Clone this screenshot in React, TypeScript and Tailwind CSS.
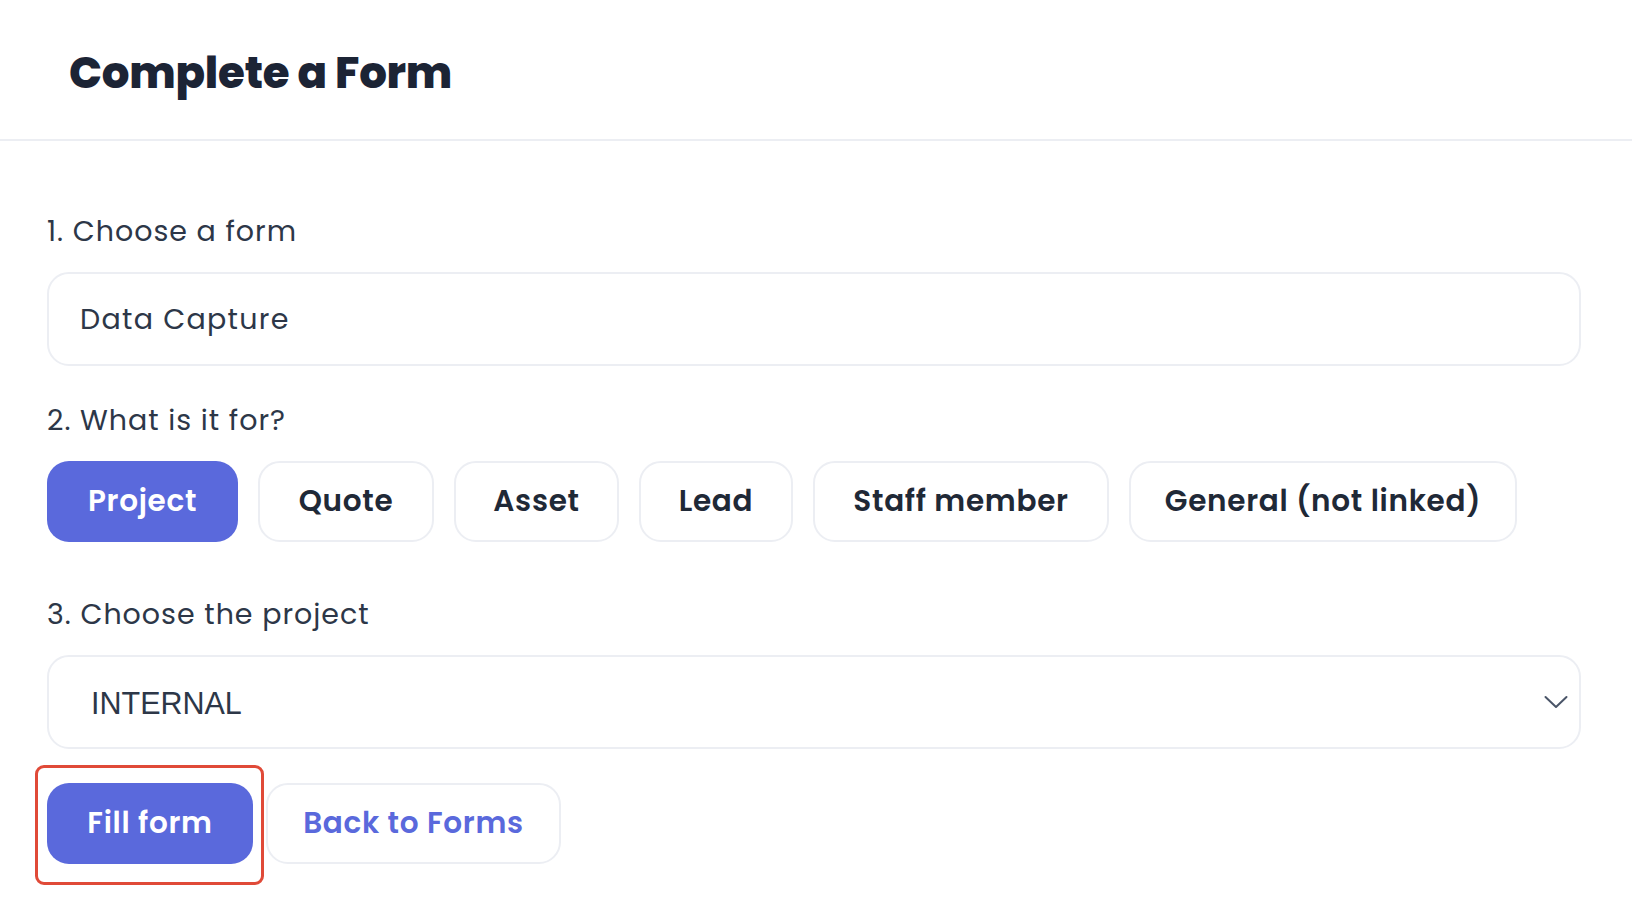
import React, { useState } from "react";

const ui = "font-['Poppins','Open_Sans','Noto_Sans',sans-serif]";

// Each target pill keeps its own width so the row lines up with the design.
const targets: { name: string; w: string }[] = [
  { name: "Project", w: "w-[191px]" },
  { name: "Quote", w: "w-[176px]" },
  { name: "Asset", w: "w-[165px]" },
  { name: "Lead", w: "w-[154px]" },
  { name: "Staff member", w: "w-[296px]" },
  { name: "General (not linked)", w: "w-[388px]" },
];

function Label({ children }: { children: React.ReactNode }) {
  return <div className="h-[40px] flex items-center text-[28.5px] leading-[40px] text-[#2d3748] tracking-[1px]">{children}</div>;
}

function Chevron() {
  return (
    <svg width="24" height="14" viewBox="0 0 24 14" fill="none" stroke="#4a5568" strokeWidth="2" strokeLinecap="round" strokeLinejoin="round">
      <path d="M1.5 2l10.5 10 10.5-10" />
    </svg>
  );
}

const pill = "h-[81px] shrink-0 rounded-[22px] text-[29.5px] font-semibold tracking-[0.7px] flex items-center justify-center";

export default function App() {
  const [target, setTarget] = useState("Project");
  return (
    <div className={`min-h-[920px] bg-white ${ui}`}>
      <header className="h-[141px] border-b-2 border-[#eceef3] flex items-center pl-[69px]">
        <h1 className="text-[43.5px] font-extrabold tracking-[-0.2px] text-[#1c2435] leading-none mt-[7px]">Complete a Form</h1>
      </header>

      <main className="pl-[47px] pr-[51px] pt-[70px] flex flex-col">
        <Label>1. Choose a form</Label>
        <div className="mt-[21px] h-[94px] rounded-[22px] border-2 border-[#eceef3] flex items-center pl-[31px] text-[28.5px] text-[#2d3748] tracking-[1.3px]">
          Data Capture
        </div>

        <div className="mt-[34px]">
          <Label>2. What is it for?</Label>
        </div>
        <div className="mt-[21px] flex gap-[20px]">
          {targets.map((t) => {
            const active = t.name === target;
            return (
              <button
                key={t.name}
                onClick={() => setTarget(t.name)}
                className={
                  active
                    ? `${pill} ${t.w} bg-[#5a69dc] text-white`
                    : `${pill} ${t.w} border-2 border-[#eceef3] bg-white text-[#1f2937]`
                }
              >
                {t.name}
              </button>
            );
          })}
        </div>

        <div className="mt-[52px]">
          <Label>3. Choose the project</Label>
        </div>
        <div className="mt-[21px] h-[94px] rounded-[22px] border-2 border-[#eceef3] flex items-center justify-between pl-[42px] pr-[11px]">
          <span className="font-['Liberation_Sans',Arial,sans-serif] text-[30.5px] text-[#2d3748] mt-[3px]">INTERNAL</span>
          <Chevron />
        </div>

        <div className="mt-[34px] flex gap-[13px]">
          <div className="relative">
            <button className="h-[81px] w-[206px] rounded-[22px] bg-[#5a69dc] text-white text-[29.5px] font-semibold tracking-[0.7px]">
              Fill form
            </button>
            <div className="absolute -left-[12px] -top-[18px] w-[229px] h-[120px] rounded-[9px] border-[3px] border-[#e04a38] pointer-events-none" />
          </div>
          <button className="h-[81px] w-[295px] rounded-[22px] border-2 border-[#eceef3] bg-white text-[#5a69dc] text-[29.5px] font-semibold tracking-[0.7px]">
            Back to Forms
          </button>
        </div>
      </main>
    </div>
  );
}
